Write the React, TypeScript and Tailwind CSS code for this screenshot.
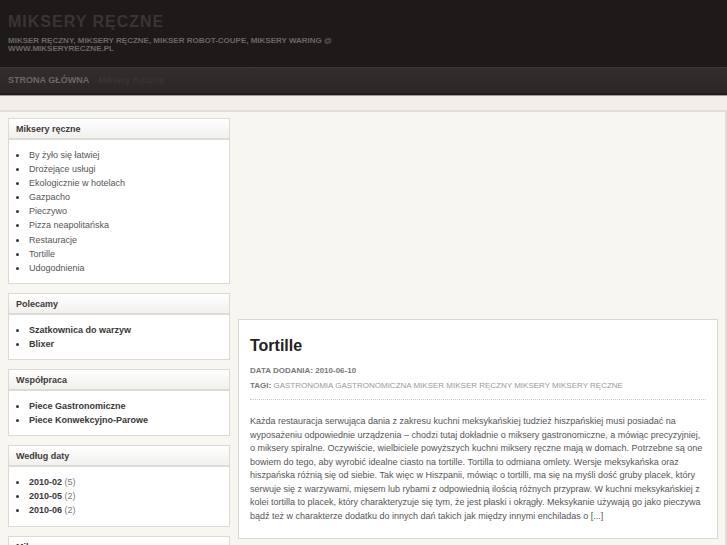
const categories = [
  'By żyło się łatwiej',
  'Drożejące usługi',
  'Ekologicznie w hotelach',
  'Gazpacho',
  'Pieczywo',
  'Pizza neapolitańska',
  'Restauracje',
  'Tortille',
  'Udogodnienia',
]

function Widget({ title, children }: { title: string; children: React.ReactNode }) {
  return (
    <div className="border border-[#dcdad3] bg-white">
      <div className="h-[21px] border-b-2 border-[#dddbd5] bg-gradient-to-b from-white to-[#f1f0ec] pl-[7px] text-[9px] font-bold leading-[20px] text-[#3d3a38]">
        {title}
      </div>
      {children}
    </div>
  )
}

function Bullets({ items, bold }: { items: React.ReactNode[]; bold?: boolean }) {
  return (
    <ul className={`list-disc pt-[8px] pb-[8px] pl-[19px] text-[9px] leading-[14.1px] marker:text-[#333] ${bold ? 'font-bold text-[#3a3735]' : 'text-[#555]'}`}>
      {items.map((it, i) => (
        <li key={i} className="pl-[1px]">{it}</li>
      ))}
    </ul>
  )
}

export default function App() {
  return (
    <div className="min-h-[545px] bg-[#f1efe8] font-['Liberation_Sans',Arial,sans-serif]">
      <header className="h-[67px] bg-[#1e1a19] px-2 pt-[12px]">
        <div className="text-[16px] font-bold uppercase leading-[20px] tracking-[1px] text-[#3a3534]">Miksery Ręczne</div>
        <div className="mt-[5px] w-[340px] text-[8px] font-bold uppercase leading-[8px] text-[#6c6664]">
          Mikser ręczny, miksery ręczne, mikser Robot-Coupe, miksery Waring @ www.mikseryreczne.pl
        </div>
      </header>
      <nav className="flex h-[28px] items-center gap-[9px] border-t border-b-2 border-t-[#3a3635] border-b-[#1f1c1b] bg-gradient-to-b from-[#322e2d] to-[#2b2726] px-2 text-[9px]">
        <span className="font-bold uppercase text-[#6d6765]">Strona główna</span>
        <span className="tracking-[0.15px] text-[#3e3938]">Miksery Ręczne</span>
      </nav>
      <div className="h-px bg-[#a29c93]" />
      <div className="h-[14px]" />
      <div className="flex gap-2 border-t-2 border-r-2 border-[#e0ded7] bg-[#f7f6f1] pt-[6px] pl-2 pr-[6px]">
        <aside className="flex w-[222px] flex-col gap-[9px]">
          <Widget title="Miksery ręczne">
            <Bullets items={categories} />
          </Widget>
          <Widget title="Polecamy">
            <Bullets bold items={['Szatkownica do warzyw', 'Blixer']} />
          </Widget>
          <Widget title="Współpraca">
            <Bullets bold items={['Piece Gastronomiczne', 'Piece Konwekcyjno-Parowe']} />
          </Widget>
          <Widget title="Według daty">
            <Bullets
              bold
              items={['2010-02', '2010-05', '2010-06'].map((d, i) => (
                <span key={d}>
                  {d} <span className="font-normal text-[#777]">({[5, 2, 2][i]})</span>
                </span>
              ))}
            />
          </Widget>
          <Widget title="Miksery ręczne">
            <Bullets items={['Mikser ręczny', 'Miksery']} />
          </Widget>
        </aside>
        <main className="w-[480px]">
          <div className="h-[201px]" />
          <article className="border border-[#d9d7d1] bg-white px-[11px] pt-[16px] pb-[15px]">
            <h1 className="text-[16px] font-bold leading-[20px] text-[#222]">Tortille</h1>
            <div className="mt-[10px] text-[8px] font-bold uppercase leading-[10px] text-[#777]">Data dodania: 2010-06-10</div>
            <div className="mt-[5px] border-b border-dotted border-[#c8c8c8] pb-[8px] text-[8px] uppercase leading-[10px] text-[#9a9a9a]">
              <span className="font-bold text-[#777]">Tagi:</span> Gastronomia gastronomiczna mikser mikser ręczny miksery miksery ręczne
            </div>
            <p className="mt-[15px] text-[9px] leading-[13.5px] text-[#555]">
              Każda restauracja serwująca dania z zakresu kuchni meksykańskiej tudzież hiszpańskiej musi posiadać na wyposażeniu odpowiednie urządzenia – chodzi tutaj dokładnie o miksery gastronomiczne, a mówiąc precyzyjniej, o miksery spiralne. Oczywiście, wielbiciele powyższych kuchni miksery ręczne mają w domach. Potrzebne są one bowiem do tego, aby wyrobić idealne ciasto na tortille. Tortilla to odmiana omlety. Wersje meksykańska oraz hiszpańska różnią się od siebie. Tak więc w Hiszpanii, mówiąc o tortilli, ma się na myśli dość gruby placek, który serwuje się z warzywami, mięsem lub rybami z odpowiednią ilością różnych przypraw. W kuchni meksykańskiej z kolei tortilla to placek, który charakteryzuje się tym, że jest płaski i okrągły. Meksykanie używają go jako pieczywa bądź też w charakterze dodatku do innych dań takich jak między innymi enchiladas o [...]
            </p>
          </article>
        </main>
      </div>
    </div>
  )
}
